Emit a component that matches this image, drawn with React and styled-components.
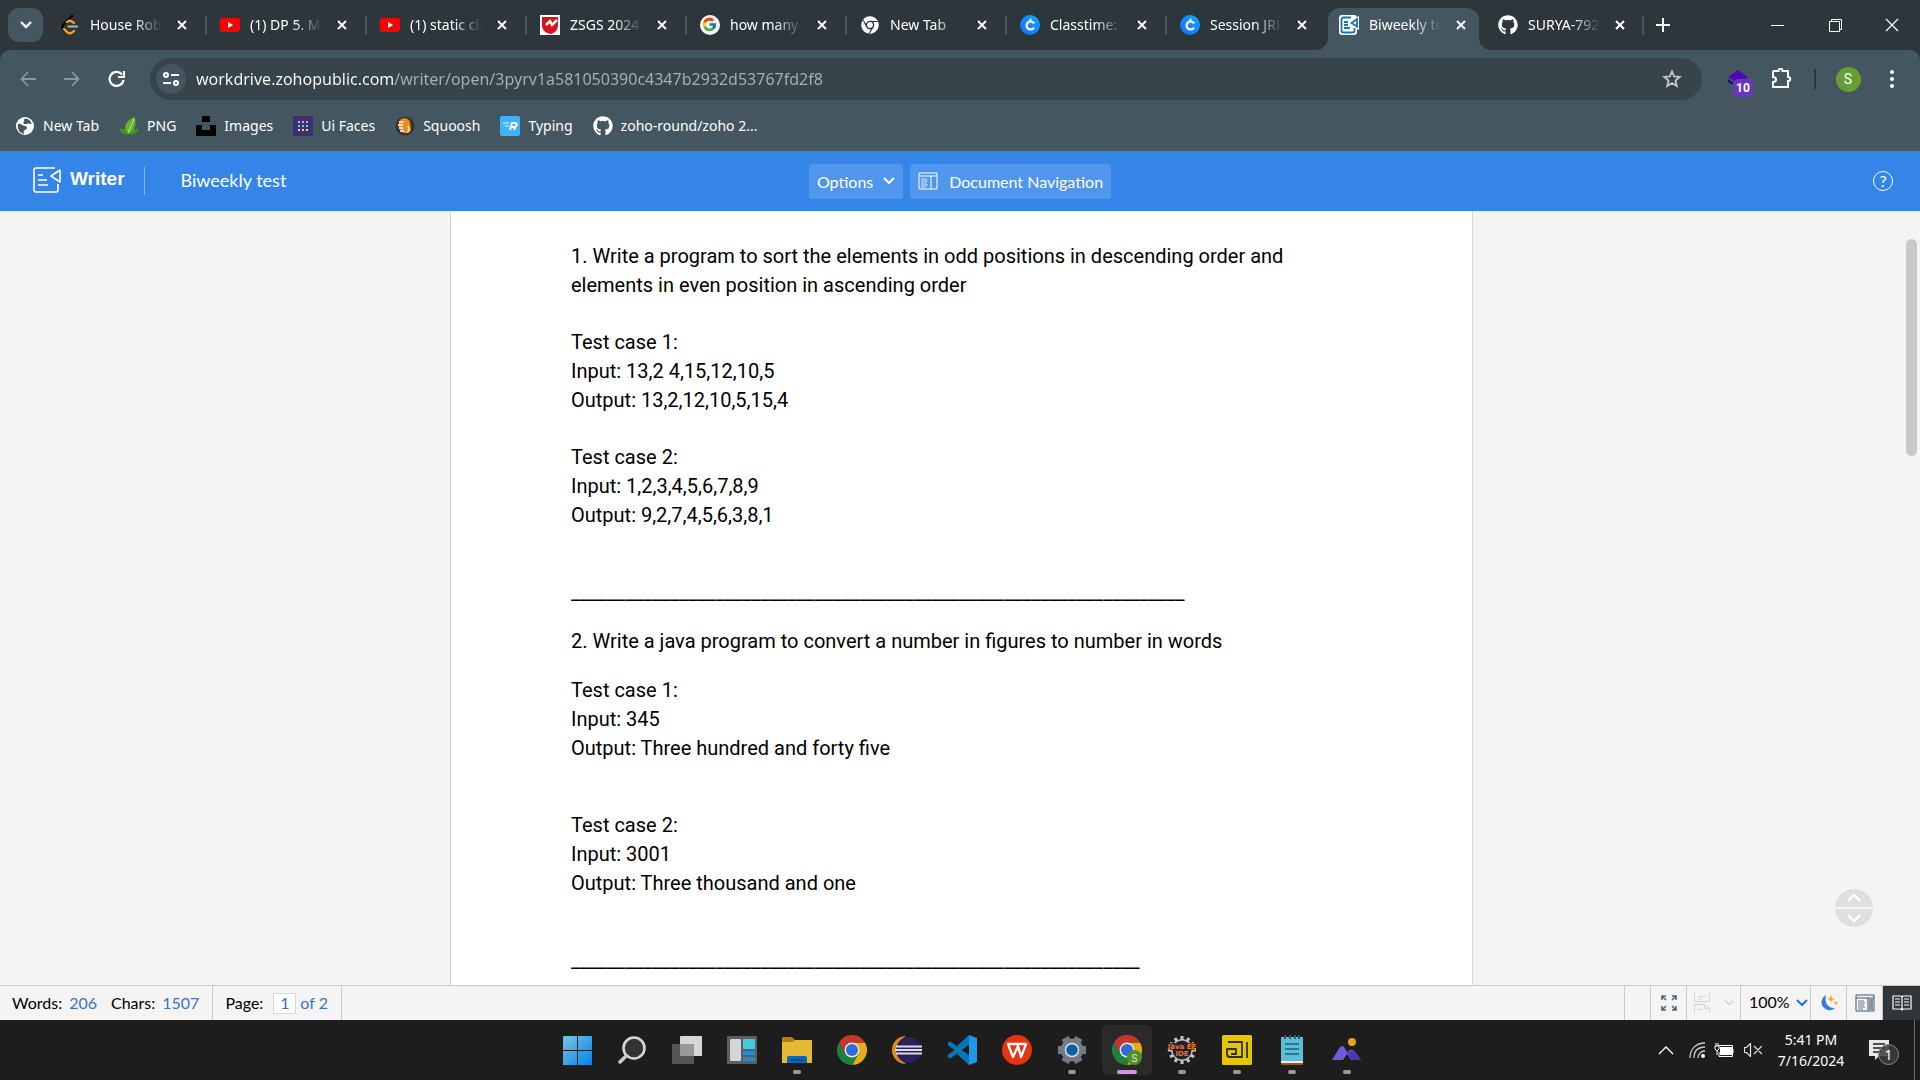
import React from "react";
import styled, { createGlobalStyle, css } from "styled-components";
import { FaGithub, FaChrome } from "react-icons/fa";
import { FcGoogle } from "react-icons/fc";

const ui = `"Noto Sans", "Open Sans", sans-serif`;
const lato = `Lato, "Open Sans", sans-serif`;

const GlobalStyle = createGlobalStyle`
  *, *::before, *::after { box-sizing: border-box; }
  html, body, #root { height: 100%; }
  body { margin: 0; overflow: hidden; font-family: ${ui}; }
  button, input, select { font: inherit; color: inherit; margin: 0; }
  button { padding: 0; border: 0; background: none; cursor: pointer; }
  a { color: inherit; text-decoration: none; }
  svg { display: block; flex: none; }
`;

const Screen = styled.div`
  display: flex;
  flex-direction: column;
  height: 100vh;
  background: #f4f4f4;
`;

/* ---------- browser frame ---------- */

const TabStrip = styled.nav`
  display: flex;
  align-items: stretch;
  height: 50px;
  flex: none;
  padding: 8px 0 0 8px;
  background: #2c363b;
  color: #fff;
`;

const TabSearch = styled.button`
  display: grid;
  place-items: center;
  width: 35px;
  height: 34px;
  margin-right: 4px;
  border-radius: 11px;
  background: #44565f;
`;

const activeTab = css`
  &::before {
    content: "";
    position: absolute;
    z-index: -1;
    inset: 0 6px 0 2px;
    border-radius: 12px 12px 0 0;
    background: #44565f;
  }
  &::after {
    content: "";
    position: absolute;
    z-index: -1;
    inset: auto -6px 0 -10px;
    height: 12px;
    background:
      radial-gradient(circle at 0 0, transparent 12px, #44565f 12px) left / 12px 12px no-repeat,
      radial-gradient(circle at 100% 0, transparent 12px, #44565f 12px) right / 12px 12px no-repeat;
  }
`;

const Tab = styled.div`
  position: relative;
  z-index: 0;
  display: flex;
  align-items: center;
  width: ${(p) => (p.$late ? 159 : 160)}px;
  padding: 0 0 8px 13px;
  ${(p) => p.$active && activeTab}
`;

const TabLink = styled.a`
  display: flex;
  align-items: center;
  gap: 10px;
`;

const TabLabel = styled.span`
  width: 72px;
  overflow: hidden;
  white-space: nowrap;
  font-size: 14px;
  line-height: 20px;
  mask-image: linear-gradient(to right, #000 44px, transparent 72px);
`;

const TabClose = styled.button`
  display: grid;
  place-items: center;
  width: 20px;
  height: 20px;
  margin-left: 10px;
`;

const TabDivider = styled.span`
  width: 2px;
  height: 20px;
  margin-left: auto;
  border-radius: 1px;
  background: ${(p) => (p.$hidden ? "transparent" : "#44565f")};
`;

const NewTab = styled.button`
  display: grid;
  place-items: center;
  width: 34px;
  height: 34px;
  margin-left: 2px;
`;

const WindowControls = styled.div`
  display: flex;
  margin-left: auto;
`;

const WindowButton = styled.button`
  display: grid;
  place-items: center;
  width: 57px;
  height: 34px;
`;

const Frame = styled.div`
  flex: none;
  background: #2c363b;
`;

const Toolbar = styled.header`
  height: 101px;
  border-radius: 10px 10px 0 0;
  background: #44565f;
  color: #fff;
`;

const ToolRow = styled.div`
  display: flex;
  align-items: center;
  padding: 8px 6px 0;
`;

const ToolButton = styled.button`
  display: grid;
  place-items: center;
  width: 44px;
  height: 42px;
  position: relative;
`;

const Address = styled.label`
  display: flex;
  align-items: center;
  flex: 1;
  height: 42px;
  margin: 0 14px 0 12px;
  padding: 0 8px 0 6px;
  border-radius: 21px;
  background: #38444b;
`;

const SiteInfo = styled.button`
  display: grid;
  place-items: center;
  width: 30px;
  height: 30px;
  border-radius: 50%;
  background: #44565f;
`;

const UrlInput = styled.input`
  flex: 1;
  min-width: 0;
  height: 30px;
  padding: 0 0 0 10px;
  border: 0;
  outline: 0;
  font-size: 16px;
  color: #fff;
  background: linear-gradient(to right, #fff 209px, #a9b1b5 209px);
  background-clip: text;
  -webkit-text-fill-color: transparent;
`;

const CountBadge = styled.span`
  position: absolute;
  left: 17px;
  top: 21px;
  width: 20px;
  height: 18px;
  border-radius: 5px;
  background: #6a35bd;
  font: 700 12px/18px Roboto, sans-serif;
  text-align: center;
`;

const ToolDivider = styled.span`
  width: 2px;
  height: 20px;
  margin: 0 10px;
  background: #2c363b;
`;

const Avatar = styled.span`
  width: 25px;
  height: 25px;
  border-radius: 50%;
  background: #669d34;
  font: 14px/25px Roboto, sans-serif;
  text-align: center;
`;

const Bookmarks = styled.nav`
  display: flex;
  gap: 20px;
  height: 52px;
  align-items: center;
  padding-left: 15px;
`;

const Bookmark = styled.a`
  display: flex;
  align-items: center;
  gap: 8px;
  font-size: 14px;
  line-height: 20px;
  white-space: nowrap;
`;

/* ---------- writer app ---------- */

const AppHeader = styled.header`
  display: grid;
  grid-template-columns: 1fr auto 1fr;
  align-items: center;
  flex: none;
  height: 60px;
  padding: 0 27px;
  background: #3585e8;
  color: #fff;
  font-family: ${lato};
`;

const Brand = styled.div`
  display: flex;
  align-items: flex-start;
  padding-left: 6px;
`;

const BrandName = styled.span`
  padding: 0 19px 0 9px;
  font: 700 19px/24px "Liberation Sans", sans-serif;
`;

const DocName = styled.h1`
  height: 28px;
  margin: 0;
  padding-left: 36px;
  border-left: 1px solid #86b6f1;
  font-size: 18px;
  font-weight: 400;
  line-height: 26px;
`;

const HeaderActions = styled.div`
  display: flex;
  gap: 7px;
`;

const HeaderButton = styled.button`
  display: flex;
  align-items: center;
  gap: ${(p) => p.$gap}px;
  height: 35px;
  padding: 0 8px;
  border-radius: 3px;
  background: #5096ed;
  font-size: 16px;
`;

const HelpButton = styled.button`
  justify-self: end;
  width: 20px;
  height: 20px;
  border: 1px solid #fff;
  border-radius: 50%;
  font-size: 16px;
  line-height: 18px;
`;

const Canvas = styled.main`
  position: relative;
  display: flex;
  justify-content: center;
  flex: 1;
  min-height: 0;
  overflow: hidden;
  padding-left: 3px;
`;

const Page = styled.article`
  width: 1023px;
  max-width: 100%;
  min-height: 100%;
  padding: 31px 120px 0;
  border: solid #d4d4d4;
  border-width: 0 1px;
  background: #fff;
  color: #000;
  font: 20px/29px Roboto, sans-serif;
`;

const Para = styled.p`
  margin: ${(p) => p.$top || 0}px 0 0;
`;

const ScrollThumb = styled.div`
  position: absolute;
  right: 3px;
  top: 28px;
  width: 11px;
  height: 217px;
  border-radius: 6px;
  background: #c9c9c9;
`;

const PageJump = styled.div`
  position: absolute;
  right: 47px;
  bottom: 58px;
  display: grid;
  gap: 2px;
  overflow: hidden;
  border-radius: 50%;
`;

const JumpButton = styled.button`
  display: grid;
  place-items: center;
  width: 38px;
  height: 18px;
  background: #dfdfdf;
`;

const StatusBar = styled.footer`
  display: flex;
  justify-content: space-between;
  flex: none;
  height: 35px;
  border-top: 1px solid #cacaca;
  background: #f4f4f4;
  color: #000;
  font: 16px/34px ${lato};
`;

const StatusGroup = styled.div`
  display: flex;
`;

const StatusCell = styled.div`
  display: flex;
  align-items: center;
  gap: 7px;
  padding: 0 13px 0 12px;
  border-right: 1px solid #cacaca;
`;

const Value = styled.span`
  margin-right: ${(p) => p.$after || 0}px;
  color: #3b73c0;
`;

const PageInput = styled.input`
  width: 23px;
  height: 21px;
  margin: 0 -3px 0 3px;
  padding: 0;
  border: 1px solid #d8d8d8;
  background: #fff;
  color: #3b73c0;
  text-align: center;
`;

const ToolCell = styled.button`
  display: flex;
  align-items: center;
  justify-content: center;
  gap: 14px;
  width: ${(p) => p.$w}px;
  border-left: 1px solid #cacaca;
  background: ${(p) => (p.$dark ? "#30363a" : "transparent")};
`;

const ZoomCell = styled.label`
  display: flex;
  align-items: center;
  width: 70px;
  padding-left: 8px;
  gap: 6px;
  border-left: 1px solid #cacaca;
`;

const ZoomSelect = styled.select`
  width: 41px;
  height: 34px;
  padding: 0 0 2px;
  border: 0;
  appearance: none;
  background: transparent;
  line-height: 20px;
`;

/* ---------- taskbar ---------- */

const Taskbar = styled.footer`
  display: grid;
  grid-template-columns: 1fr auto 1fr;
  align-items: center;
  flex: none;
  height: 60px;
  padding-left: 4px;
  background: #1d1d1d;
  color: #fff;
`;

const TaskApps = styled.div`
  grid-column: 2;
  display: flex;
  gap: 5px;
`;

const TaskButton = styled.button`
  position: relative;
  display: grid;
  place-items: center;
  width: 50px;
  height: 50px;
  border-radius: 5px;
  background: ${(p) => (p.$state === "active" ? "#2a2a2a" : "transparent")};
  &::after {
    content: ${(p) => (p.$state ? '""' : "none")};
    position: absolute;
    left: 50%;
    bottom: 1px;
    width: ${(p) => (p.$state === "active" ? 20 : 8)}px;
    height: 4px;
    border-radius: 2px;
    transform: translateX(-50%);
    background: ${(p) => (p.$state === "active" ? "#d196dc" : "#999")};
  }
`;

const Tray = styled.div`
  display: flex;
  align-items: center;
  justify-content: flex-end;
  height: 100%;
`;

const TrayButton = styled.button`
  display: grid;
  place-items: center;
  width: ${(p) => p.$w}px;
  height: 40px;
`;

const Clock = styled.time`
  width: 86px;
  font-size: 14px;
  line-height: 21px;
  text-align: center;
`;

const NoticeButton = styled.button`
  position: relative;
  width: 30px;
  height: 30px;
  margin: 0 15px 0 15px;
`;

const NoticeCount = styled.span`
  position: absolute;
  right: 0;
  bottom: 0;
  width: 21px;
  height: 21px;
  border: 1px solid #8a8a8a;
  border-radius: 50%;
  background: rgba(60, 60, 60, 0.85);
  font-size: 14px;
  line-height: 19px;
`;

const ShowDesktop = styled.button`
  width: 6px;
  height: 100%;
  border-left: 1px solid #6b6b6b;
`;

/* ---------- icons ---------- */

const Icon = ({ w = 20, h = w, box = `0 0 ${w} ${h}`, children, ...rest }) => (
  <svg width={w} height={h} viewBox={box} fill="none" aria-hidden="true" {...rest}>
    {children}
  </svg>
);

const Stroke = ({ d, c = "#fff", s = 2, ...rest }) => (
  <Icon {...rest}>
    <path d={d} stroke={c} strokeWidth={s} />
  </Icon>
);

const Leetcode = () => (
  <Icon>
    <path d="M12 1 4 9c-2 2-2 4 0 6" stroke="#000" strokeWidth="2.4" strokeLinecap="round" />
    <path d="M7 7c2-2 4-2 7 1M4 14l3 3c2 2 4 2 7-1" stroke="#f9a01b" strokeWidth="2.4" strokeLinecap="round" />
    <path d="M8.500 11.500H17" stroke="#b3b3b3" strokeWidth="2.200" strokeLinecap="round" />
  </Icon>
);

const Youtube = () => (
  <Icon>
    <rect y="3" width="20" height="14" rx="3" fill="#f00" />
    <path d="m8 7 5 3-5 3z" fill="#fff" />
  </Icon>
);

const Zsgs = () => (
  <Icon>
    <path d="M0 0h20v20H0z" fill="#fff" />
    <path d="M2 2h16v7c0 6-3 9-7 10C5 18 2 15 2 10z" fill="#d9121f" />
    <path d="m6 10 4-4 2 4 5-5" stroke="#fff" strokeWidth="2.500" />
  </Icon>
);

const GoogleIcon = () => (
  <Icon>
    <circle cx="10" cy="10" r="10" fill="#fff" />
    <FcGoogle x="1.500" y="1.500" width="17" height="17" />
  </Icon>
);

const Classtime = () => (
  <Icon>
    <defs>
      <linearGradient id="ct" x1="0" y1="1" x2="1" y2="0">
        <stop stopColor="#2962ff" />
        <stop offset="1" stopColor="#00b0ff" />
      </linearGradient>
    </defs>
    <circle cx="10" cy="10" r="10" fill="url(#ct)" />
    <path d="M13.500 7.800A4 4 0 1 0 13.500 13.200M10.500 6V4.500" stroke="#fff" strokeWidth="2.200" strokeLinecap="round" />
  </Icon>
);

const WriterFavicon = () => (
  <Icon>
    <rect y="0" width="18" height="20" rx="3" fill="#fff" />
    <path d="M12 2.500H4.500a2 2 0 0 0-2 2v11a2 2 0 0 0 2 2h9a2 2 0 0 0 2-2V13M5 7h4M5 10h4M5 13h6" stroke="#1d6fb8" strokeWidth="1.800" />
    <path d="M18.500 3.500v9L12 8z" fill="#fff" stroke="#fff" strokeWidth="3" />
    <path d="M18 4v7.500L12.500 8z" fill="#fff" stroke="#1d6fb8" strokeWidth="1.800" />
  </Icon>
);

const Globe = () => (
  <Icon>
    <circle cx="10" cy="10" r="9" fill="#fff" />
    <path d="M3 8c3-1 4 2 7 2s2 4 0 4-1 3-1 4C5 17 2 14 3 8ZM9 3c3-1 7 1 7.500 5-2 0-3-1-5 0s-4-1-3-2 1-2 .5-3Z" fill="#44565f" />
  </Icon>
);

const Leaf = () => (
  <Icon>
    <path d="M7 16C4 9 9 3 16 1c1 7 1 12-6 17z" fill="#65b52c" />
    <path d="m15 3-6 14" stroke="#c2e59a" />
    <path d="M0 13c5-1 8 1 9 5-4 1-7-1-9-5ZM20 13c-4 0-8 1-9 5 4 1 7-1 9-5Z" fill="#3f9a1c" />
  </Icon>
);

const Unsplash = () => (
  <Icon>
    <path d="M6 0h8v6H6zM0 9h6v5h8V9h6v11H0z" fill="#000" />
  </Icon>
);

const UiFaces = () => (
  <Icon>
    <path d="M0 0h20v20H0z" fill="#3b316f" />
    {["#d8a1ef", "#6cc4ea", "#e9df69"].map((c, r) =>
      [5, 9, 13].map((x) => <rect key={`${r}${x}`} x={x} y={5 + r * 4} width="2" height="2" fill={c} />)
    )}
  </Icon>
);

const Squoosh = () => (
  <Icon>
    <circle cx="10" cy="10" r="9.500" fill="#333" />
    <path d="M5 4c3-3 9-2 10 2 1 3 0 5 1 8-2 4-8 4-10 1-3-3-3-8-1-11Z" fill="#f08a1c" />
    <path d="M4 6h5M3 9h5M4 12h4M5 15h4" stroke="#fff" strokeWidth="1.500" />
    <path d="M13 10c2 3 1 6-1 6" stroke="#ffd9a0" strokeWidth="2" />
  </Icon>
);

const Typing = () => (
  <Icon>
    <rect width="20" height="20" rx="2" fill="#3cb3fa" />
    <path d="M3 7h6M5 10h4" stroke="#b5e2ff" strokeWidth="1.500" />
    <path d="m10 14 2-7h3c3 0 2 4-1 4h-2m2 0 1 3" stroke="#fff" strokeWidth="2" />
  </Icon>
);

const WriterLogo = () => (
  <Icon w={28} h={26}>
    <path
      d="M22 1H3a2 2 0 0 0-2 2v20a2 2 0 0 0 2 2h20a2 2 0 0 0 2-2v-6M5 8h5M5 13h9M5 18h10M27 3v12l-9-6z"
      stroke="#fff"
      strokeWidth="1.600"
      strokeLinejoin="round"
    />
  </Icon>
);

const PanelIcon = ({ c = "#fff", w = 20, h = 18, fill = "none" }) => (
  <Icon w={w} h={h} box="0 0 20 18">
    <path d="M1 1h18v16H1zM1 4h18M13 4v13" stroke={c} />
    <path d="M14 5h4v11h-4z" fill={fill} />
    <path d="M3 7h6M3 9h7M3 11h6M3 13h7M3 15h5" stroke={c} opacity=".75" />
  </Icon>
);

const Moon = () => (
  <Icon w={18} h={18}>
    <path d="M6 1a8 8 0 1 0 9 13C8 15 4 8 6 1Z" fill="#3e7bd0" />
    <path d="m11 1 1 3 3 1-3 1-1 3-1-3-3-1 3-1z" fill="#fba919" />
    <circle cx="16" cy="9" r="1.500" fill="#fba919" />
  </Icon>
);

const Book = () => (
  <Icon w={20} h={16}>
    <path d="M1 1h8l1 1 1-1h8v13h-8l-1 1-1-1H1zM10 2v12M3 4h5M3 7h5M3 10h5M12 4h5M12 7h5M12 10h5" stroke="#fff" strokeWidth="1.200" />
  </Icon>
);

const Expand = () => (
  <Icon w={16} h={16}>
    <path d="M1 5V1h4M1 1l4 4M11 1h4v4M15 1l-4 4M1 11v4h4M1 15l4-4M11 15h4v-4M15 15l-4-4" stroke="#4e6474" strokeWidth="1.600" />
  </Icon>
);

const PageBreak = () => (
  <Icon w={16} h={20}>
    <path d="M.5 0v8.500h15V0M4 3.500h8M4 6h5M.5 20v-8.500h10l5 4V20M10.500 11.500v4h5M4 16.500h5" stroke="#d2d4d6" />
  </Icon>
);

const Start = () => (
  <Icon w={29} h={29}>
    <defs>
      <linearGradient id="st" x1="0" y1="0" x2="1" y2="1">
        <stop stopColor="#7cc4dc" />
        <stop offset="1" stopColor="#0084ec" />
      </linearGradient>
    </defs>
    <path d="M1 0h13v14H0V1zM15 0h14v14H15zM0 15h14v14H0zM15 15h14v14H15z" fill="url(#st)" />
  </Icon>
);

const Search = () => (
  <Icon w={28} h={28}>
    <circle cx="16" cy="12" r="10.500" fill="#333" stroke="#d6d8da" strokeWidth="2.600" />
    <path d="m8 20-6 6" stroke="#c9ccce" strokeWidth="3.500" strokeLinecap="round" />
  </Icon>
);

const TaskView = () => (
  <Icon w={30} h={28}>
    <rect x="8" width="22" height="20" rx="1" fill="#d6d6d6" />
    <rect y="8" width="22" height="20" rx="1" fill="#555" />
    <path d="M8 8h14v12H8z" fill="#989898" />
  </Icon>
);

const Widgets = () => (
  <Icon w={30} h={28}>
    <rect width="30" height="28" rx="1" fill="#5c5f61" />
    <rect x="3" y="3" width="11" height="22" rx="1" fill="#d5d6d8" />
    <path d="M16 3h12v10H16z" fill="#46c8dc" />
    <path d="M16 15h12v4H16zM16 21h12v4H16z" fill="#1a8fd4" />
  </Icon>
);

const Explorer = () => (
  <Icon w={30} h={28}>
    <path d="M0 2q0-1 1-1h9l3 3h16q1 0 1 1v3H0z" fill="#b47f06" />
    <path d="M0 6h10l3-2h17v23H0z" fill="#e6b935" />
    <path d="M5 27v-5q0-2 2-2h16q2 0 2 2v5z" fill="#0b65b8" />
    <path d="M8 24h14" stroke="#064780" strokeWidth="1.500" />
  </Icon>
);

const ChromeColor = ({ children }) => (
  <Icon w={30} h={30}>
    <path d="M15 7.500 28 7.500A15 15 0 0 1 15 30L21.500 18.750Z" fill="#e2ae14" />
    <path d="M21.500 18.750 15 30A15 15 0 0 1 2 7.500L8.500 18.750Z" fill="#21813c" />
    <path d="M8.500 18.750 2 7.500A15 15 0 0 1 28 7.500H15Z" fill="#c5362b" />
    <circle cx="15" cy="15" r="7.500" fill="#e8e8e8" />
    <circle cx="15" cy="15" r="6" fill="#2e6cdb" />
    {children}
  </Icon>
);

const ChromeProfile = () => (
  <ChromeColor>
    <circle cx="22.500" cy="22.500" r="7.500" fill="#4d8f2d" />
    <text x="22.500" y="26.500" fill="#dfead6" fontFamily="Roboto, sans-serif" fontSize="10" textAnchor="middle">S</text>
  </ChromeColor>
);

const Eclipse = () => (
  <Icon w={30} h={28}>
    <path d="M14 0a14 14 0 0 0 0 28A16 16 0 0 1 14 0Z" fill="#e08a1e" />
    <circle cx="17" cy="14" r="13" fill="#2b2158" />
    <path d="M4 10.500h26M3 14h27M4 17.500h26" stroke="#dcdbe6" strokeWidth="2" />
  </Icon>
);

const VsCode = () => (
  <Icon w={30} h={30}>
    <path d="m3 9 19 14M3 21 22 7" stroke="#0878bc" strokeWidth="4.500" strokeLinecap="round" />
    <path d="m22 0 8 3v24l-8 3z" fill="#2196e3" />
    <path d="M22 0v9l-8 6-4-4zM22 30v-9l-8-6-4 4z" fill="#0a74b8" />
  </Icon>
);

const Wps = () => (
  <Icon w={30} h={30}>
    <circle cx="15" cy="15" r="15" fill="#e5340f" />
    <path d="M19 9H6l5 13 5-11 3 11 5-13h-5" stroke="#fff" strokeWidth="2.300" strokeLinejoin="round" />
  </Icon>
);

const Gear = ({ teeth, c, r, w = 5 }) => (
  <g stroke={c}>
    {Array.from({ length: teeth }, (_, i) => (
      <path key={i} d="M15 1v6" strokeWidth={w} transform={`rotate(${(i * 360) / teeth + 30} 15 15)`} />
    ))}
    <circle cx="15" cy="15" r={r} fill={c} />
  </g>
);

const Settings = () => (
  <Icon w={30} h={30}>
    <Gear teeth={6} c="#727b83" r={11} w={8} />
    <circle cx="15" cy="15" r="6.500" fill="#0a5ea8" stroke="#dedede" strokeWidth="1.500" />
  </Icon>
);

const JavaEE = () => (
  <Icon w={30} h={30}>
    <Gear teeth={12} c="#c4c4c4" r={10.5} w={3} />
    <circle cx="15" cy="15" r="9.500" fill="#262131" />
    <path d="M2 8h26v7H2z" fill="#262131" opacity=".8" />
    <g fill="#ed7616" fontFamily="DejaVu Sans, sans-serif" fontSize="7" fontWeight="700" textAnchor="middle">
      <text x="15" y="14">Java EE</text>
      <text x="15" y="21">IDE</text>
    </g>
  </Icon>
);

const YellowApp = () => (
  <Icon w={30} h={30}>
    <rect width="30" height="30" rx="1.500" fill="#e6c502" />
    <path d="M6 7h14v15H8q-3 0-3-3v-5h9v5H9M25 7v16" stroke="#302f28" strokeWidth="1.800" strokeLinejoin="round" />
  </Icon>
);

const Notepad = () => (
  <Icon w={22} h={30}>
    <path d="M0 2h22v26H0z" fill="#5fbcd3" />
    <path d="M4 0v4M9 0v4M14 0v4M18 0v4" stroke="#0c6680" strokeWidth="2" />
    <path d="M4 9h14M4 14h14M4 19h14" stroke="#0c6680" strokeWidth="1.500" />
    <path d="M0 26h22v2H0z" fill="#eee" />
    <path d="M0 28h22v2H0z" fill="#a1540f" />
  </Icon>
);

const PurpleM = () => (
  <Icon w={30} h={30}>
    <circle cx="20" cy="7" r="4" fill="#eaa312" />
    <path d="m0 25 8-13q2-2 4 0l3 5 3-2q3-1 5 2l6 8H19l-4-6-4 6z" fill="#6f5bdc" />
    <path d="m15 17 3-1q3-1 5 2l6 7H19z" fill="#4c35b8" />
  </Icon>
);

const Down = (p) => <Stroke w={12} h={8} d="m1 1 5 5 5-5" {...p} />;

/* ---------- data ---------- */

const tabs = [
  ["House Robber", Leetcode],
  ["(1) DP 5. Maximum", Youtube],
  ["(1) static class", Youtube],
  ["ZSGS 2024 batch", Zsgs],
  ["how many weeks", GoogleIcon],
  ["New Tab", () => <FaChrome size={18} style={{ margin: 1 }} />],
  ["Classtime: Live", Classtime],
  ["Session JRKA", Classtime],
  ["Biweekly test", WriterFavicon],
  ["SURYA-7921", () => <FaGithub size={20} />],
];
const activeIndex = 8;

const bookmarks = [
  ["New Tab", Globe],
  ["PNG", Leaf],
  ["Images", Unsplash],
  ["Ui Faces", UiFaces],
  ["Squoosh", Squoosh],
  ["Typing", Typing],
  ["zoho-round/zoho 2...", () => <FaGithub size={20} />],
];

const paragraphs = [
  [0, ["1. Write a program to sort the elements in odd positions in descending order and elements in even position in ascending order"]],
  [28, ["Test case 1:", "Input: 13,2 4,15,12,10,5", "Output: 13,2,12,10,5,15,4"]],
  [28, ["Test case 2:", "Input: 1,2,3,4,5,6,7,8,9", "Output: 9,2,7,4,5,6,3,8,1"]],
  [48, ["_".repeat(68)]],
  [20, ["2. Write a java program to convert a number in figures to number in words"]],
  [20, ["Test case 1:", "Input: 345", "Output: Three hundred and forty five"]],
  [48, ["Test case 2:", "Input: 3001", "Output: Three thousand and one"]],
  [48, ["_".repeat(63)]],
];

const taskApps = [
  ["Start", Start],
  ["Search", Search],
  ["Task view", TaskView],
  ["Widgets", Widgets],
  ["File Explorer", Explorer, "open"],
  ["Chrome", ChromeColor],
  ["Eclipse", Eclipse],
  ["VS Code", VsCode],
  ["WPS Office", Wps],
  ["Settings", Settings, "open"],
  ["Chrome profile", ChromeProfile, "active"],
  ["Java EE IDE", JavaEE, "open"],
  ["Tamil keyboard", YellowApp, "open"],
  ["Notepad", Notepad, "open"],
  ["Mountain", PurpleM, "open"],
];

/* ---------- page ---------- */

export default function App() {
  return (
    <Screen>
      <GlobalStyle />
      <TabStrip aria-label="Tabs">
        <TabSearch aria-label="Search tabs"><Down s={2.4} /></TabSearch>
        {tabs.map(([label, Fav], i) => (
          <Tab key={label} $active={i === activeIndex} $late={i >= activeIndex - 1}>
            <TabLink href="#">
              <Fav />
              <TabLabel>{label}</TabLabel>
            </TabLink>
            <TabClose aria-label={`Close ${label}`}>
              <Stroke w={10} d="m1 1 8 8M9 1l-8 8" />
            </TabClose>
            <TabDivider $hidden={i === activeIndex || i === activeIndex - 1} />
          </Tab>
        ))}
        <NewTab aria-label="Open new tab"><Stroke w={14} d="M7 0v14M0 7h14" /></NewTab>
        <WindowControls>
          <WindowButton aria-label="Minimize"><Stroke w={13} d="M0 6.500h13" s={1} /></WindowButton>
          <WindowButton aria-label="Restore"><Stroke w={14} d="M1.500 3.500h10v10h-10zM3.500 3.500v-2h10v10h-2" s={1} /></WindowButton>
          <WindowButton aria-label="Close window"><Stroke w={14} d="m1 1 12 12M13 1 1 13" s={1.2} /></WindowButton>
        </WindowControls>
      </TabStrip>

      <Frame>
        <Toolbar>
          <ToolRow>
            <ToolButton aria-label="Back"><Stroke w={16} d="M16 8H2M8 1 1.500 8 8 15" s={1.8} c="#8b979d" /></ToolButton>
            <ToolButton aria-label="Forward"><Stroke w={16} d="M0 8h14M8 1l6.500 7L8 15" s={1.8} c="#8b979d" /></ToolButton>
            <ToolButton aria-label="Reload"><Stroke w={18} d="M16.500 10A7 7 0 1 1 15 4.500M17 1v6h-6" s={2.2} /></ToolButton>
            <Address>
              <SiteInfo aria-label="Site information">
                <Icon w={16} h={14}>
                  <circle cx="3" cy="3" r="2" stroke="#fff" strokeWidth="2" />
                  <circle cx="13" cy="11" r="2" stroke="#fff" strokeWidth="2" />
                  <path d="M8 3h8M0 11h8" stroke="#fff" strokeWidth="2" />
                </Icon>
              </SiteInfo>
              <UrlInput
                aria-label="Address"
                defaultValue="workdrive.zohopublic.com/writer/open/3pyrv1a581050390c4347b2932d53767fd2f8"
              />
              <ToolButton as="span">
                <Stroke w={20} d="m10 2.500 2.200 5 5.500.5-4.200 3.600 1.300 5.400-4.800-3-4.800 3 1.300-5.400L2.300 8l5.500-.5z" c="#c5c9cb" s={1.8} />
              </ToolButton>
            </Address>
            <ToolButton aria-label="Extension, 10 items">
              <Icon w={20} h={18}>
                <path d="m10 0 10 7-10 7L0 7z" fill="#4b09b4" />
                <path d="m0 9 10 7v2L0 12z" fill="#25067a" />
              </Icon>
              <CountBadge>10</CountBadge>
            </ToolButton>
            <ToolButton aria-label="Extensions">
              <Stroke w={22} d="M3 3h4.500c0-3 4-3 4 0H17v6c3 0 3 4 0 4v6H2v-5c4 0 4-5 0-5V4q0-1 1-1Z" />
            </ToolButton>
            <ToolDivider />
            <ToolButton aria-label="Profile"><Avatar>S</Avatar></ToolButton>
            <ToolButton aria-label="Menu">
              <Icon w={4} h={18} fill="#fff">
                <circle cx="2" cy="2" r="2" /><circle cx="2" cy="9" r="2" /><circle cx="2" cy="16" r="2" />
              </Icon>
            </ToolButton>
          </ToolRow>
          <Bookmarks aria-label="Bookmarks">
            {bookmarks.map(([label, Fav]) => (
              <Bookmark key={label} href="#"><Fav />{label}</Bookmark>
            ))}
          </Bookmarks>
        </Toolbar>
      </Frame>

      <AppHeader>
        <Brand>
          <WriterLogo />
          <BrandName>Writer</BrandName>
          <DocName>Biweekly test</DocName>
        </Brand>
        <HeaderActions>
          <HeaderButton $gap={10}>Options<Down /></HeaderButton>
          <HeaderButton $gap={11}><PanelIcon />Document Navigation</HeaderButton>
        </HeaderActions>
        <HelpButton aria-label="Help">?</HelpButton>
      </AppHeader>

      <Canvas>
        <Page>
          {paragraphs.map(([top, lines], i) => (
            <Para key={i} $top={top}>
              {lines.map((line, n) => (
                <React.Fragment key={n}>{n > 0 && <br />}{line}</React.Fragment>
              ))}
            </Para>
          ))}
        </Page>
        <ScrollThumb />
        <PageJump>
          <JumpButton aria-label="Previous page"><Stroke w={14} h={8} d="m1 7 6-6 6 6" s={2.4} /></JumpButton>
          <JumpButton aria-label="Next page"><Stroke w={14} h={8} d="m1 1 6 6 6-6" s={2.4} /></JumpButton>
        </PageJump>
      </Canvas>

      <StatusBar>
        <StatusGroup>
          <StatusCell>
            <span>Words:</span><Value $after={7}>206</Value>
            <span>Chars:</span><Value>1507</Value>
          </StatusCell>
          <StatusCell>
            <label htmlFor="page-number">Page:</label>
            <PageInput id="page-number" defaultValue="1" />
            <Value>of 2</Value>
          </StatusCell>
        </StatusGroup>
        <StatusGroup>
          <ToolCell $w={26} aria-label="Status" />
          <ToolCell $w={36} aria-label="Full screen"><Expand /></ToolCell>
          <ToolCell $w={54} aria-label="Page break view"><PageBreak /><Down w={10} box="0 0 12 8" c="#d2d4d6" /></ToolCell>
          <ZoomCell>
            <ZoomSelect aria-label="Zoom" defaultValue="100%"><option>100%</option><option>150%</option></ZoomSelect>
            <Down c="#2b6cc4" />
          </ZoomCell>
          <ToolCell $w={36} aria-label="Night mode"><Moon /></ToolCell>
          <ToolCell $w={36} aria-label="Side panel"><PanelIcon c="#3f5568" fill="#8496a5" /></ToolCell>
          <ToolCell $w={38} $dark aria-label="Reader view"><Book /></ToolCell>
        </StatusGroup>
      </StatusBar>

      <Taskbar>
        <TaskApps>
          {taskApps.map(([label, Glyph, state]) => (
            <TaskButton key={label} aria-label={label} $state={state}><Glyph /></TaskButton>
          ))}
        </TaskApps>
        <Tray>
          <TrayButton $w={36} aria-label="Hidden icons"><Stroke w={16} h={9} d="m1 8 7-7 7 7" s={1.4} /></TrayButton>
          <TrayButton $w={26} aria-label="Wi-Fi">
            <Icon w={16} h={16}>
              <path d="M1 16C1 7 7 1 16 1M5 16C5 9 9 5 16 5M9 16c0-4 3-7 7-7" stroke="#c9c9c9" strokeWidth="1.300" />
              <circle cx="14" cy="14" r="2" fill="#fff" />
            </Icon>
          </TrayButton>
          <TrayButton $w={28} aria-label="Battery">
            <Icon w={20} h={14}>
              <path d="M6 4h12v8H6z" fill="#fff" />
              <path d="M5 2.500h13.500v11h-13.500V9M19 6v4M1 3h4v3l-2 2-2-2zM2 0v3M4 0v3M3 8v4" stroke="#fff" />
            </Icon>
          </TrayButton>
          <TrayButton $w={30} aria-label="Muted">
            <Icon w={18} h={14}>
              <path d="M.5 4.500h2l4-4v13l-4-4h-2zM10 3l8 8M18 3l-8 8" stroke="#e6e6e6" strokeWidth="1.200" />
            </Icon>
          </TrayButton>
          <Clock>5:41 PM<br />7/16/2024</Clock>
          <NoticeButton aria-label="1 notification">
            <Icon w={20} h={20}>
              <path d="M0 0h20v16h-10l-4 4v-4H0z" fill="#e8e8e8" />
              <path d="M4 4h12M4 8h12M4 12h8" stroke="#1d1d1d" strokeWidth="1.300" />
            </Icon>
            <NoticeCount>1</NoticeCount>
          </NoticeButton>
          <ShowDesktop aria-label="Show desktop" />
        </Tray>
      </Taskbar>
    </Screen>
  );
}
